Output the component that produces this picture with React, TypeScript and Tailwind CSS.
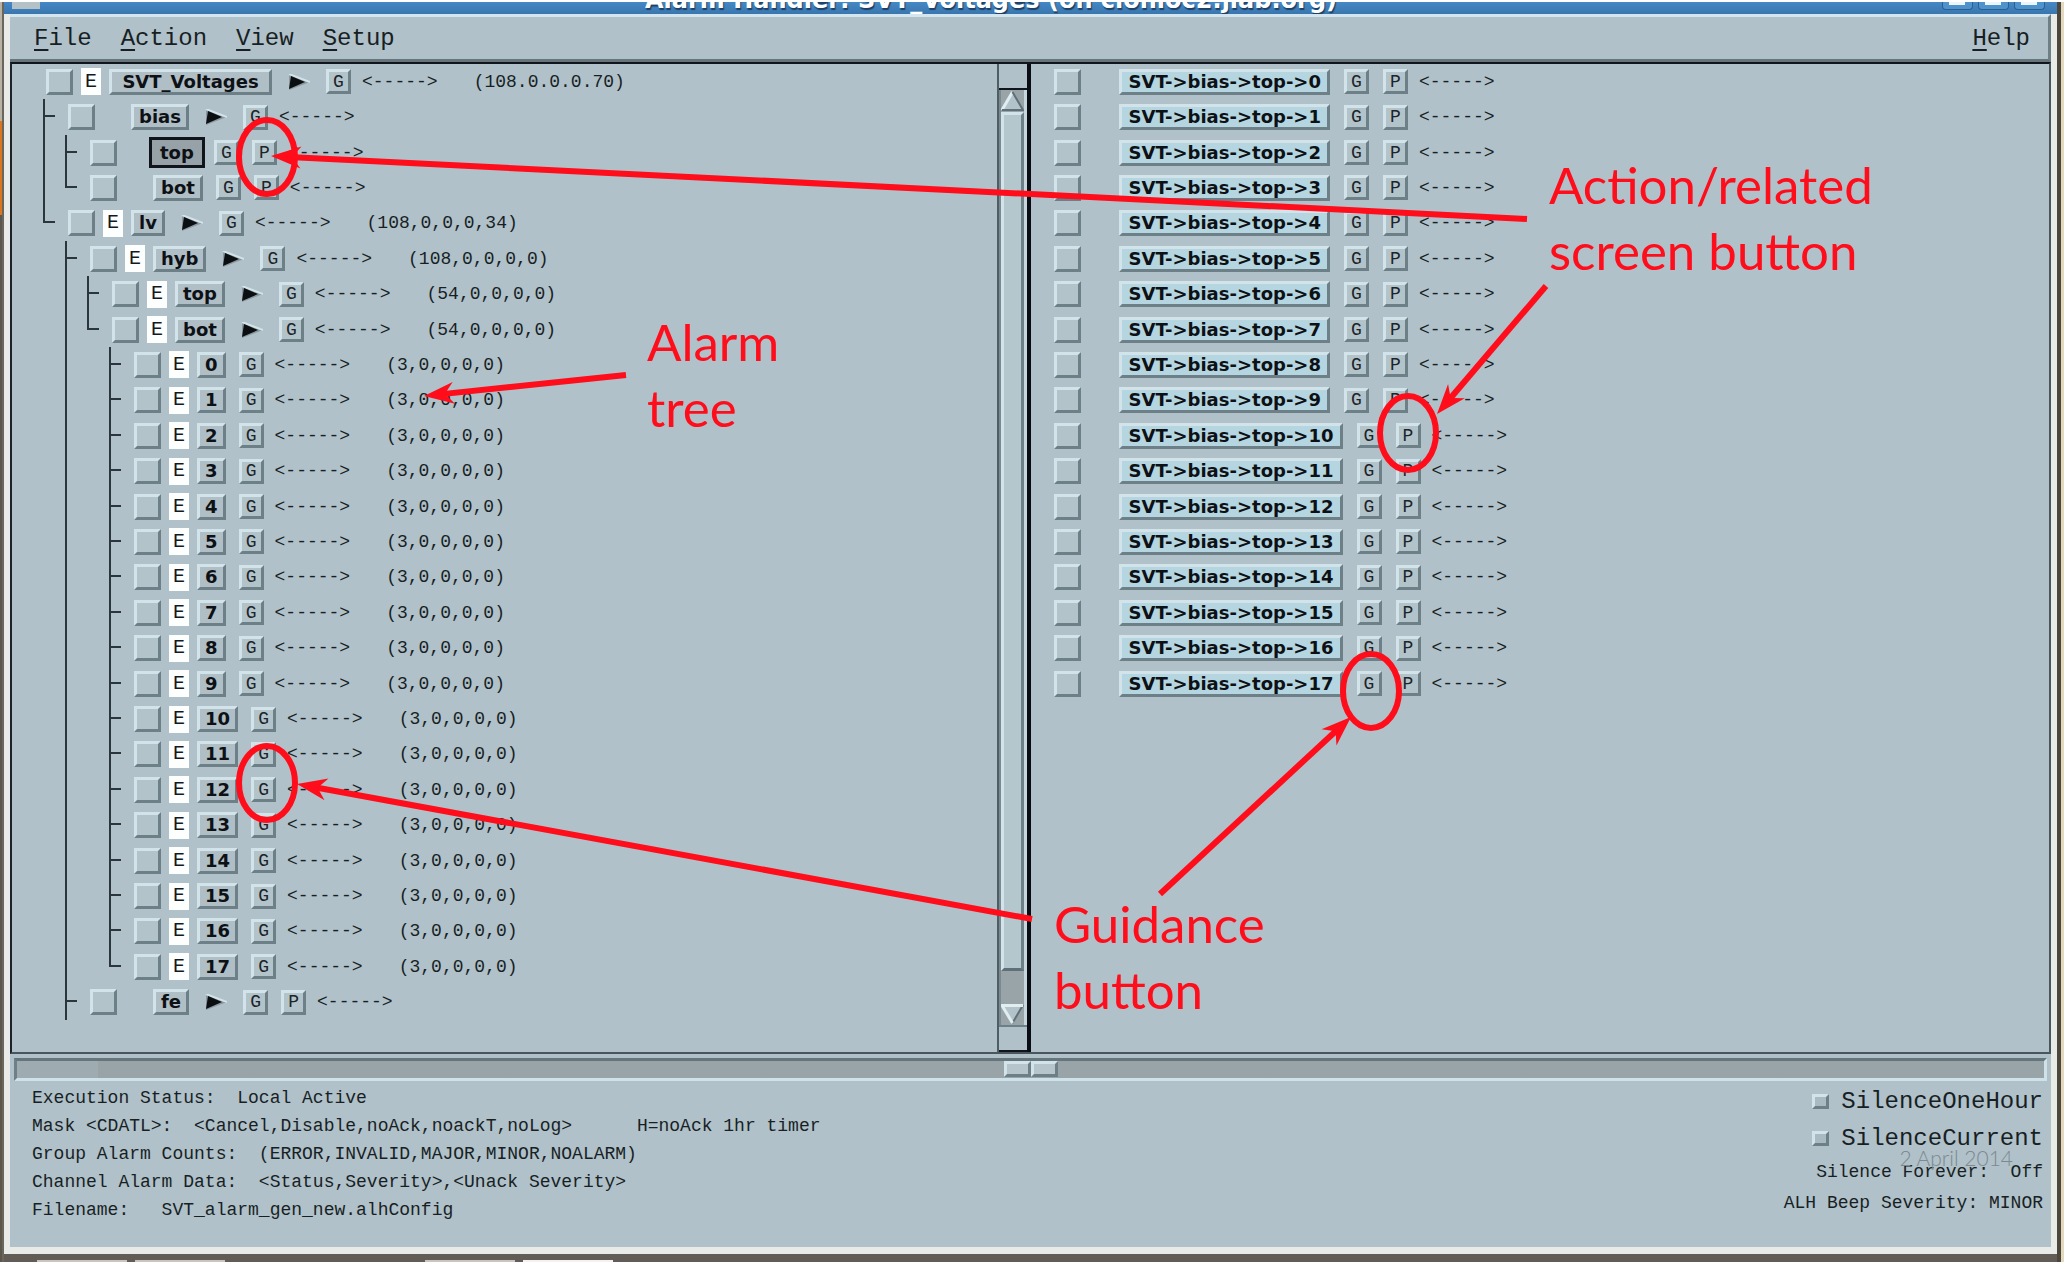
import React from "react";

type Guide = "none" | "line" | "tee" | "last";

interface TreeRow {
  name: string;
  guides: Guide[];
  error?: boolean;
  expandable?: boolean;
  process?: boolean;
  selected?: boolean;
  counts?: string;
}

const channelRows: TreeRow[] = Array.from({ length: 18 }, (_, i) => ({
  name: String(i),
  guides: ["none", "line", "none", i === 17 ? "last" : "tee"] as Guide[],
  error: true,
  counts: "(3,0,0,0,0)",
}));

const treeRows: TreeRow[] = [
  { name: "SVT_Voltages", guides: [], error: true, expandable: true, counts: "(108.0.0.0.70)" },
  { name: "bias", guides: ["tee"], expandable: true },
  { name: "top", guides: ["line", "tee"], process: true, selected: true },
  { name: "bot", guides: ["line", "last"], process: true },
  { name: "lv", guides: ["last"], error: true, expandable: true, counts: "(108,0,0,0,34)" },
  { name: "hyb", guides: ["none", "tee"], error: true, expandable: true, counts: "(108,0,0,0,0)" },
  { name: "top", guides: ["none", "line", "tee"], error: true, expandable: true, counts: "(54,0,0,0,0)" },
  { name: "bot", guides: ["none", "line", "last"], error: true, expandable: true, counts: "(54,0,0,0,0)" },
  ...channelRows,
  { name: "fe", guides: ["none", "tee"], expandable: true, process: true },
];

const raised = "border-[3px] border-t-[#d2e3e9] border-l-[#d2e3e9] border-b-[#6d7f87] border-r-[#6d7f87]";
const mono = "font-['Liberation_Mono',monospace]";

function GuideCell({ kind }: { kind: Guide }) {
  const top = kind === "none" ? "" : "border-l-2";
  const bottom = kind === "line" || kind === "tee" ? "border-l-2" : "";
  return (
    <span className="flex w-[22px] shrink-0 flex-col self-stretch">
      <span className={`flex flex-1 items-end border-[#2b363c] ${top}`}>
        {(kind === "tee" || kind === "last") && <span className="h-[2px] w-[10px] bg-[#2b363c]" />}
      </span>
      <span className={`flex-1 border-[#2b363c] ${bottom}`} />
    </span>
  );
}

function AckButton({ label }: { label: string }) {
  return <button aria-label={`Acknowledge ${label}`} className={`h-[26px] w-[27px] shrink-0 bg-[#b3c3ca] ${raised}`} />;
}

function LetterButton({ letter, label }: { letter: string; label: string }) {
  return (
    <button
      aria-label={label}
      className={`flex h-[25px] w-[25px] shrink-0 items-center justify-center bg-[#b3c3ca] text-[18px] leading-none text-[#1c2429] ${raised}`}
    >
      {letter}
    </button>
  );
}

function NameButton({ row }: { row: TreeRow }) {
  const look = row.selected
    ? "h-[31px] -mx-1 border-[3px] border-[#10151c] bg-[#96a1a8] px-2"
    : `h-[26px] bg-[#b0bec5] px-[5px] ${raised}`;
  const width = row.guides.length === 0 ? "min-w-[163px]" : "";
  return (
    <button
      className={`flex shrink-0 items-center justify-center font-['DejaVu_Sans',sans-serif] text-[18px] font-bold leading-none text-[#0d1115] ${look} ${width}`}
    >
      {row.name}
    </button>
  );
}

function CascadeArrow({ label }: { label: string }) {
  return (
    <button aria-label={`Expand ${label}`} className="ml-4 mr-[3px] shrink-0">
      <svg width="22" height="16" viewBox="0 0 22 16" className="block">
        <path d="M1 0 22 8 1 16Z" fill="#8b989e" />
        <path d="M1 0 22 8" stroke="#d2e3e9" strokeWidth="2" />
        <path d="M3 2 17 8 1 15Z" fill="#0c0f12" />
      </svg>
    </button>
  );
}

function TreeLine({ row }: { row: TreeRow }) {
  return (
    <li className="flex min-h-0 items-center whitespace-pre">
      {row.guides.map((g, i) => (
        <GuideCell key={i} kind={g} />
      ))}
      <span className="w-[3px] shrink-0" />
      <AckButton label={row.name} />
      <span className="mx-2 flex h-[27px] w-5 shrink-0 items-center justify-center">
        {row.error && (
          <span className="flex h-full w-full items-center justify-center bg-[#fdfefe] text-[20px] leading-none text-[#15191c]">E</span>
        )}
      </span>
      <NameButton row={row} />
      {row.expandable && <CascadeArrow label={row.name} />}
      <span className="ml-[13px] flex shrink-0 gap-[13px]">
        <LetterButton letter="G" label={`Guidance ${row.name}`} />
        {row.process && <LetterButton letter="P" label={`Process ${row.name}`} />}
      </span>
      <span className="ml-[11px]">&lt;-----&gt;</span>
      {row.counts && <span className="ml-9">{row.counts}</span>}
    </li>
  );
}

function GroupLine({ index }: { index: number }) {
  const name = `SVT->bias->top->${index}`;
  return (
    <li className="flex min-h-0 items-center whitespace-pre">
      <AckButton label={name} />
      <button
        className={`ml-[38px] flex h-[26px] shrink-0 items-center bg-[#b5d6e0] px-[6px] font-['DejaVu_Sans',sans-serif] text-[18px] font-bold leading-none text-[#0d1115] ${raised}`}
      >
        {name}
      </button>
      <span className="ml-[14px] flex shrink-0 gap-[14px]">
        <LetterButton letter="G" label={`Guidance ${name}`} />
        <LetterButton letter="P" label={`Process ${name}`} />
      </span>
      <span className="ml-[11px]">&lt;-----&gt;</span>
    </li>
  );
}

function ScrollBar() {
  return (
    <div className="flex flex-col border-l-2 border-r-4 border-l-[#4f5d64] border-r-[#0b0d14]">
      <div className="h-[26px] border-b-2 border-r-0 border-[#10151c]" />
      <div className="flex flex-1 flex-col items-center border-r-[3px] border-l-2 border-l-[#7b8a91] border-r-[#c6d6dc] bg-[#98a4a8]">
        <button aria-label="Scroll up" className="py-[1px]">
          <svg width="23" height="20" viewBox="0 0 23 20" className="block">
            <path d="M11.500 1 22 19H1Z" fill="#b3c3ca" />
            <path d="M11.500 1 1 19" stroke="#e0eef2" strokeWidth="3" />
            <path d="M11.500 1 22 19H1" fill="none" stroke="#5f7078" strokeWidth="2" />
          </svg>
        </button>
        <div className="w-full flex-1 border-[3px] border-b-[#5f7078] border-l-[#d2e3e9] border-r-[#6d7f87] border-t-[#d2e3e9] bg-[#b3c7cc]" />
        <div className="h-8" />
        <button aria-label="Scroll down" className="py-[1px]">
          <svg width="23" height="20" viewBox="0 0 23 20" className="block">
            <path d="M1 1H22L11.500 19Z" fill="#b3c3ca" />
            <path d="M22 1 11.500 19" stroke="#5f7078" strokeWidth="2" />
            <path d="M22 1.500H1L11.500 19" fill="none" stroke="#e0eef2" strokeWidth="3" />
          </svg>
        </button>
      </div>
      <div className="h-[27px] border-b-2 border-t-2 border-b-[#10151c] border-t-[#6d7f87]" />
    </div>
  );
}

function MenuItem({ label }: { label: string }) {
  return (
    <button className="leading-[28px]">
      <span className="underline decoration-2 underline-offset-4">{label[0]}</span>
      {label.slice(1)}
    </button>
  );
}

function Toggle({ label }: { label: string }) {
  return (
    <label className="flex items-center gap-3 text-[24px]">
      <input type="checkbox" className={`h-[15px] w-[17px] appearance-none bg-[#a9bac2] ${raised}`} />
      {label}
    </label>
  );
}

function Arrow({ from, to }: { from: [number, number]; to: [number, number] }) {
  const dx = from[0] - to[0];
  const dy = from[1] - to[1];
  const len = Math.hypot(dx, dy);
  const angle = (Math.atan2(dy, dx) * 180) / Math.PI;
  return (
    <g transform={`translate(${to[0]} ${to[1]}) rotate(${angle})`}>
      <path d={`M18 0H${len}`} stroke="#ff0d1b" strokeWidth="6" />
      <path d="M0 0 30 -11 21 0 30 11Z" fill="#ff0d1b" />
    </g>
  );
}

function Annotations() {
  return (
    <div className="pointer-events-none absolute inset-0 overflow-hidden font-['Lato',sans-serif] text-[51px] leading-[66px] text-[#ff0d1b]">
      <svg className="absolute left-0 top-0" width="2064" height="1262" viewBox="0 0 2064 1262" fill="none">
        <g stroke="#ff0d1b" strokeWidth="6">
          <ellipse cx="267" cy="157" rx="28" ry="37" />
          <ellipse cx="1408" cy="433" rx="28" ry="37" />
          <ellipse cx="1371" cy="691" rx="28" ry="37" />
          <ellipse cx="267" cy="783" rx="28" ry="37" />
        </g>
        <Arrow from={[1527, 219]} to={[271, 156]} />
        <Arrow from={[1546, 286]} to={[1437, 414]} />
        <Arrow from={[1160, 894]} to={[1351, 717]} />
        <Arrow from={[1032, 919]} to={[297, 784]} />
        <Arrow from={[626, 375]} to={[424, 396]} />
      </svg>
      <p className="absolute left-[647px] top-[309px]">
        Alarm
        <br />
        tree
      </p>
      <p className="absolute left-[1549px] top-[152px] whitespace-nowrap">
        Action/related
        <br />
        screen button
      </p>
      <p className="absolute left-[1054px] top-[891px]">
        Guidance
        <br />
        button
      </p>
    </div>
  );
}

function TitleBar() {
  return (
    <header className="flex h-3 items-end justify-between overflow-hidden bg-linear-to-b from-[#4488c6] to-[#3a76ae] pl-2 pr-3">
      <span className="mb-[5px] h-[7px] w-7 bg-[#b4c2c8]" />
      <h1 className="mb-1 h-[10px] whitespace-nowrap font-['DejaVu_Sans',sans-serif] text-[24px] font-bold leading-[0px] text-white [text-shadow:1px_2px_1px_#1d3f63]">
        Alarm Handler: SVT_Voltages (on clonioc2.jlab.org)
      </h1>
      <span className="mb-1 flex gap-[5px]">
        {["Minimize", "Maximize", "Close"].map((name) => (
          <button key={name} aria-label={name} className="flex h-2 w-[31px] justify-center rounded-b border border-t-0 border-[#2b5f92] bg-[#4f93cd]">
            <span className="h-[3px] w-4 bg-[#eaf6fa]" />
          </button>
        ))}
      </span>
    </header>
  );
}

export default function App() {
  return (
    <div className={`relative flex min-h-screen flex-col bg-[#615c56] text-[18px] leading-none text-[#181f24] ${mono}`}>
      <div className="h-[2px] bg-white" />
      <div className="flex flex-1">
        <div className="flex w-1 flex-col border-r-2 border-[#6b665c] bg-[#b9b3a5]">
          <span className="h-[119px]" />
          <span className="h-[94px] bg-[#d9761f]" />
          <span className="flex-1 bg-[#5b574d]" />
        </div>
        <main className="flex flex-1 flex-col">
          <TitleBar />
          <div className="flex flex-1 flex-col border-x-[6px] border-b-[7px] border-[#e9ebe9] bg-[#b0c1c9]">
            <nav className="flex items-center justify-between border-b-[3px] border-r-[3px] border-t-[3px] border-b-[#66757c] border-r-[#6d7f87] border-t-[#d3e6f0] pb-[6px] pl-6 pr-[18px] pt-2 text-[24px]">
              <div className="flex gap-[29px]">
                <MenuItem label="File" />
                <MenuItem label="Action" />
                <MenuItem label="View" />
                <MenuItem label="Setup" />
              </div>
              <MenuItem label="Help" />
            </nav>

            <div className="grid flex-1 grid-cols-[985fr_34px_1017fr] border-2 border-b-[#4a565d] border-l-[#1c242a] border-r-[#4a565d] border-t-[#10151c]">
              <ul className="grid grid-rows-[repeat(27,minmax(31px,1fr))] pb-8 pl-[31px]">
                {treeRows.map((row, i) => (
                  <TreeLine key={i} row={row} />
                ))}
              </ul>
              <ScrollBar />
              <ul className="grid grid-rows-[repeat(27,minmax(31px,1fr))] pb-8 pl-[23px]">
                {Array.from({ length: 18 }, (_, i) => (
                  <GroupLine key={i} index={i} />
                ))}
              </ul>
            </div>

            <div className="mx-1 mt-1 flex h-[23px] justify-center border-[3px] border-b-[#cfe2e9] border-l-[#6d7f87] border-r-[#cfe2e9] border-t-[#66757c] bg-linear-to-r from-[#9eacb2] from-4% to-[#98a4a8] to-4%">
              <button aria-label="Resize panes" className="flex h-4">
                <span className={`h-4 w-[27px] bg-[#b5c5cb] ${raised}`} />
                <span className={`h-4 w-[27px] bg-[#b5c5cb] ${raised}`} />
              </button>
            </div>

            <footer className="flex justify-between whitespace-pre pb-[23px] pl-[22px] pr-2">
              <div className="pt-[3px] leading-[28px]">
                <p>Execution Status:  Local Active</p>
                <p>{"Mask <CDATL>:  <Cancel,Disable,noAck,noackT,noLog>      H=noAck 1hr timer"}</p>
                <p>Group Alarm Counts:  (ERROR,INVALID,MAJOR,MINOR,NOALARM)</p>
                <p>{"Channel Alarm Data:  <Status,Severity>,<Unack Severity>"}</p>
                <p>Filename:   SVT_alarm_gen_new.alhConfig</p>
              </div>
              <div className="relative flex flex-col items-end pt-[2px]">
                <div className="flex flex-col items-end leading-[37px]">
                  <Toggle label="SilenceOneHour" />
                  <Toggle label="SilenceCurrent" />
                </div>
                <p className="leading-[31px]">Silence Forever:  Off</p>
                <p className="leading-[31px]">ALH Beep Severity: MINOR</p>
                <span className="absolute right-[30px] top-[66px] font-['Lato',sans-serif] text-[21px] font-light leading-[22px] text-[#7c8990]">
                  2 April 2014
                </span>
              </div>
            </footer>
          </div>
          <div className="flex h-2 items-end gap-2 pl-[33px]">
            <span className="h-[2px] w-[90px] bg-[#c9c5bf]" />
            <span className="h-[2px] w-[90px] bg-[#c9c5bf]" />
            <span className="ml-48 h-[2px] w-[90px] bg-[#c9c5bf]" />
            <span className="h-[2px] w-[90px] bg-[#f4f2ee]" />
          </div>
        </main>
        <div className="w-[7px] border-l-4 border-[#4c463d] bg-[#e3d9bf]" />
      </div>
      <Annotations />
    </div>
  );
}
